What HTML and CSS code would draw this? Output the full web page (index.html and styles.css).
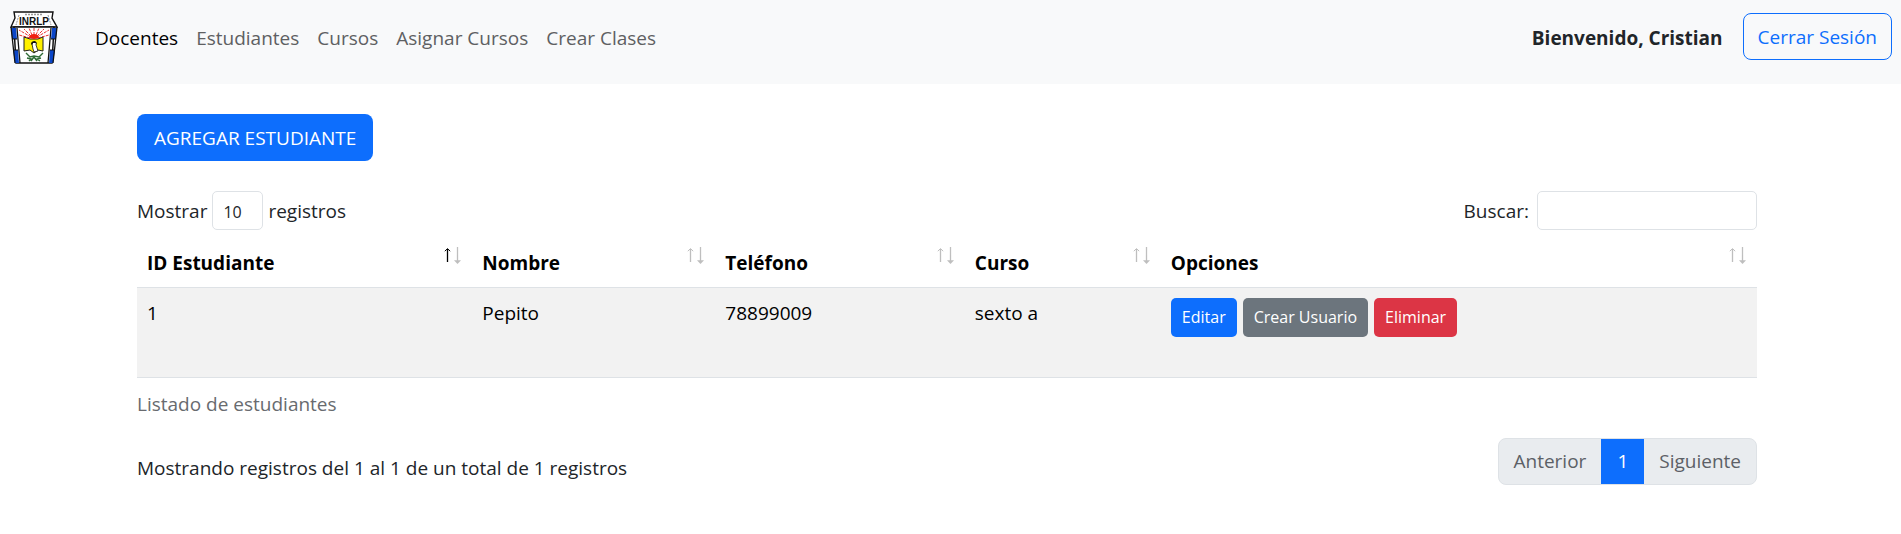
FILE: index.html
```html
<!DOCTYPE html>
<html lang="es">
<head>
<meta charset="utf-8">
<meta name="viewport" content="width=device-width, initial-scale=1">
<title>Estudiantes</title>
<link rel="stylesheet" href="styles.css">
</head>
<body>
<svg class="sprite" aria-hidden="true">
  <symbol id="sort" viewBox="0 0 18 18">
    <g class="up"><path d="M3.5 2V15" stroke-width="1.3"/><path d="M.8 4.2 3.5 1.6 6.2 4.2" stroke-width="1"/></g>
    <g class="down"><path d="M13.5 0V14" stroke-width="1.3"/><path d="M10 13.2H17L13.5 17Z" class="head"/></g>
  </symbol>
</svg>
<header class="navbar">
  <a class="brand" href="#" aria-label="INRLP">
    <svg width="48" height="56" viewBox="0 0 48 56">
      <path d="M4 2H43L42 8 47 17H1L5 8Z" fill="#fff" stroke="#111" stroke-width="1.4"/>
      <path d="M4 17H44L42 53H6Z" fill="#fff" stroke="#111" stroke-width="1.5"/>
      <path d="M1 18H6L7 29H2ZM3 40H8L9 53H5ZM42 18H47L46 29H41ZM40 40H45L43 53H39Z" fill="#0b46c8"/>
      <path d="M1 17 5 53M7 18 10 53M47 17 43 53M41 18 38 53" fill="none" stroke="#111" stroke-width="1.3"/>
      <path d="M2 29H7M3 40H8M46 29H41M45 40H40" stroke="#111"/>
      <path d="M15 4.5H33" stroke="#999" stroke-width="1.5" stroke-dasharray="2 1"/>
      <path d="M9 5 6 15M38 5 41 15" stroke="#999" stroke-dasharray="2 1"/>
      <text x="24" y="15" class="brand-text" text-anchor="middle">INRLP</text>
      <path d="M21 27 9 20M21 26 14 19M22 25 19 18M24 25V18M26 25 29 18M27 26 34 19M27 27 39 20M20 28 9 25M28 28 39 25" stroke="#e33" stroke-dasharray="3 1"/>
      <path d="M14 27 20 29H28L33 27V41L28 40 24 43 20 40 14 41Z" fill="#fff100" stroke="#222"/>
      <path d="M19 28Q20 24 24 24T29 28L24 29Z" fill="#f02010"/>
      <path d="M22 34Q22 32 25 32 27 32 26 35L28 41 24 42 23 39Z" fill="#fff" stroke="#111" stroke-width=".8"/>
      <path d="M21 34Q21 31 25 31 27 32 27 35L26 33 23 33 22 35Z" fill="#111"/>
      <path d="M16 43 20 47 24 46 29 47 33 43M17 48 21 49 19 51M31 48 27 49 30 51M21 51 24 47 27 51" fill="none" stroke="#2d6a35" stroke-width="1.4"/>
    </svg>
  </a>
  <nav class="nav">
    <a class="active" href="#">Docentes</a>
    <a href="#">Estudiantes</a>
    <a href="#">Cursos</a>
    <a href="#">Asignar Cursos</a>
    <a href="#">Crear Clases</a>
  </nav>
  <strong class="welcome">Bienvenido, Cristian</strong>
  <button class="btn btn-outline" type="button">Cerrar Sesión</button>
</header>
<main class="container">
  <button class="btn btn-primary btn-add" type="button">AGREGAR ESTUDIANTE</button>
  <div class="controls">
    <label class="control">Mostrar
      <select class="field length"><option>10</option><option>25</option><option>50</option></select>
      registros</label>
    <label class="control search">Buscar: <input class="field" type="search"></label>
  </div>
  <table class="table">
    <caption>Listado de estudiantes</caption>
    <colgroup><col class="col-id"><col class="col-name"><col class="col-phone"><col class="col-course"><col></colgroup>
    <thead>
      <tr>
        <th class="sorted"><div class="head-cell">ID Estudiante<svg class="sort"><use href="#sort"/></svg></div></th>
        <th><div class="head-cell">Nombre<svg class="sort"><use href="#sort"/></svg></div></th>
        <th><div class="head-cell">Teléfono<svg class="sort"><use href="#sort"/></svg></div></th>
        <th><div class="head-cell">Curso<svg class="sort"><use href="#sort"/></svg></div></th>
        <th><div class="head-cell">Opciones<svg class="sort"><use href="#sort"/></svg></div></th>
      </tr>
    </thead>
    <tbody>
      <tr>
        <td>1</td><td>Pepito</td><td>78899009</td><td>sexto a</td>
        <td><div class="actions">
          <button class="btn btn-small btn-primary" type="button">Editar</button>
          <button class="btn btn-small btn-secondary" type="button">Crear Usuario</button>
          <button class="btn btn-small btn-danger" type="button">Eliminar</button>
        </div></td>
      </tr>
    </tbody>
  </table>
  <div class="footer">
    <p class="info">Mostrando registros del 1 al 1 de un total de 1 registros</p>
    <nav class="pagination" aria-label="Paginación">
      <a href="#">Anterior</a><a class="current" href="#">1</a><a href="#">Siguiente</a>
    </nav>
  </div>
</main>
</body>
</html>
```
FILE: styles.css
```css
* { box-sizing: border-box; }
body {
  margin: 0;
  background: #fff;
  color: #212529;
  font: 19px/30px "Segoe UI", "Open Sans", "Noto Sans", sans-serif;
}
a { color: inherit; text-decoration: none; }
.sprite { display: block; width: 0; height: 0; }

.navbar {
  display: flex;
  align-items: flex-start;
  padding: 10px 9px 20px 10px;
  background: #f8f9fa;
}
.brand { display: block; width: 76px; height: 54px; }
.brand svg { display: block; }
.brand-text { font: bold 10px "Liberation Sans", sans-serif; fill: #111; }
.nav { display: flex; flex: 1; padding-top: 3px; }
.nav a { padding: 10px 9px; color: #5e6062; }
.nav .active { color: #000; }
.welcome { padding: 13px 20px 0 0; font-weight: 700; }
.navbar .btn { margin-top: 3px; }

.btn {
  padding: 9px 14px 7px;
  border: 1px solid transparent;
  border-radius: 8px;
  font: inherit;
  line-height: 29px;
  color: #fff;
  white-space: nowrap;
  cursor: pointer;
}
.btn-outline { border-color: #0d6efd; background: transparent; color: #0d6efd; }
.btn-primary { background: #0d6efd; }
.btn-secondary { background: #6c757d; }
.btn-danger { background: #dc3545; }
.btn-small { padding: 5px 10px; border-radius: 5px; font-size: 16px; line-height: 27px; }

.container {
  width: 100%;
  max-width: 1627px;
  margin: 0 auto;
  padding: 30px 7px 40px 0;
}
.btn-add { display: block; padding-inline: 16px; }
.controls {
  display: flex;
  justify-content: space-between;
  align-items: center;
  padding: 30px 0 7px;
}
.control { display: flex; align-items: center; gap: 5px; }
.search { gap: 8px; }
.field {
  width: 220px;
  height: 39px;
  padding: 5px 10px;
  border: 1px solid #dee2e6;
  border-radius: 5px;
  background: #fff;
  color: #212529;
  font: inherit;
  font-size: 16px;
  appearance: none;
}
.length { width: 51px; }

.table {
  width: 100%;
  table-layout: fixed;
  border-collapse: separate;
  border-spacing: 0;
  color: #000;
}
caption { caption-side: bottom; padding: 11px 0 9px; text-align: left; color: #686b6f; }
.col-id { width: 20.7%; }
.col-name { width: 15%; }
.col-phone { width: 15.4%; }
.col-course { width: 12.1%; }
th, td {
  padding: 10px;
  border-bottom: 1px solid #dee2e6;
  text-align: left;
  vertical-align: top;
}
th { font-weight: 700; }
td { background: #f2f2f2; }
.head-cell { display: flex; justify-content: space-between; align-items: flex-start; line-height: 32px; height: 30px; }
.sort { width: 18px; height: 18px; fill: none; stroke: #000; --up: .25; }
.sorted .sort { --up: 1; }
.up { opacity: var(--up); }
.down { opacity: .25; }
.head { fill: #000; stroke: none; }
.actions { display: flex; gap: 6px; padding-bottom: 30px; }

.footer { display: flex; justify-content: space-between; align-items: flex-start; padding-top: 10px; }
.info { margin: 0; padding-top: 15px; }
.pagination {
  display: flex;
  overflow: hidden;
  border: 1px solid #dee2e6;
  border-radius: 8px;
  background: #e9ecef;
}
.pagination a { padding: 8px 15px; line-height: 29px; color: #5c6066; }
.pagination .current { margin: -1px 0; padding: 9px 16px; background: #0d6efd; color: #fff; }
```
